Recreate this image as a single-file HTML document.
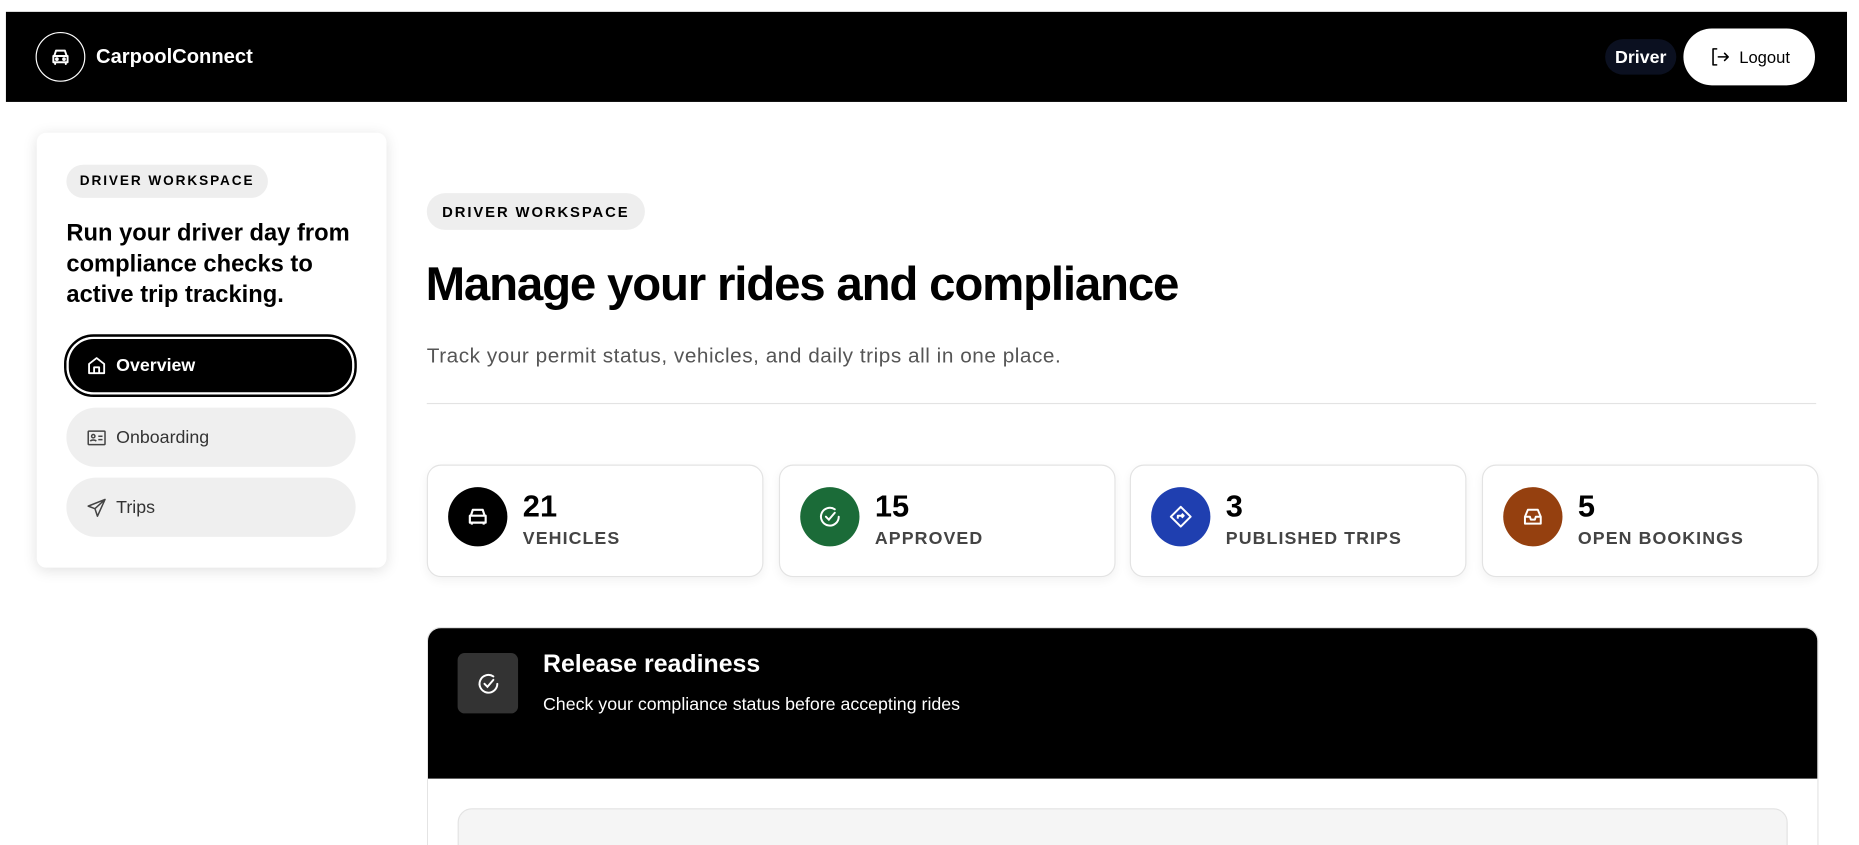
<!DOCTYPE html>
<html><head><meta charset="utf-8"><style>
html,body{margin:0;padding:0;background:#fff;overflow:hidden;width:1859px;height:845px}
#w{width:1563px;height:713px;overflow:hidden;transform:scale(1.1855,1.1851);transform-origin:0 0;position:relative;font-family:"Liberation Sans",sans-serif;color:#000}
.a{position:absolute}
.hdr{left:5px;top:10px;width:1553px;height:76px;background:#000}
.badge{background:#eee;border-radius:20px;font-size:12px;font-weight:700;letter-spacing:1.6px;display:flex;align-items:center;justify-content:center}
.nav{left:56px;width:244px;height:50px;border-radius:25px;background:#efefef;display:flex;align-items:center;font-size:15px;color:#333}
.nav svg{margin:0 8px 0 17px}
.card{top:392px;width:282px;height:93px;border:1px solid #e3e3e3;border-radius:12px;box-shadow:0 3px 8px rgba(0,0,0,.05);background:#fff}
.card .c{position:absolute;left:17px;top:18px;width:50px;height:50px;border-radius:50%;display:flex;align-items:center;justify-content:center}
.card .n{position:absolute;left:80px;top:19px;font-size:26px;font-weight:700}
.card .l{position:absolute;left:80px;top:53px;font-size:15px;font-weight:700;letter-spacing:0.9px;color:#444}
</style></head><body><div id="w">
<div class="a hdr"></div>
<div class="a" style="left:30px;top:27px;width:40px;height:40px;border:1px solid #fff;border-radius:50%;display:flex;align-items:center;justify-content:center">
<svg width="18" height="18" viewBox="0 0 24 24" fill="none" stroke="#fff" stroke-width="2.2" stroke-linecap="round" stroke-linejoin="round"><path d="M5 11l2-6h10l2 6M4 11h16v7H4zM6 18v2M18 18v2"/><circle cx="8" cy="14.5" r="1" fill="#fff"/><circle cx="16" cy="14.5" r="1" fill="#fff"/></svg></div>
<div class="a" style="left:81px;top:38px;color:#fff;font-size:17px;font-weight:700">CarpoolConnect</div>
<div class="a" style="left:1354px;top:33px;width:60px;height:30px;background:#0b1020;border-radius:15px;color:#fff;font-weight:700;font-size:15px;display:flex;align-items:center;justify-content:center">Driver</div>
<div class="a" style="left:1420px;top:24px;width:111px;height:48px;background:#fff;border-radius:24px;display:flex;align-items:center;justify-content:center;font-size:14px">
<svg width="20" height="18" viewBox="0 0 24 24" fill="none" stroke="#000" stroke-width="1.8" stroke-linecap="round" stroke-linejoin="round" style="margin-right:6px"><path d="M8 3H4v18h4M10 12h11M17 8l4 4-4 4"/></svg>Logout</div>

<div class="a" style="left:31px;top:112px;width:295px;height:367px;background:#fff;border-radius:8px;box-shadow:0 2px 12px rgba(0,0,0,.12)"></div>
<div class="a badge" style="left:56px;top:139px;width:170px;height:28px;font-size:11.5px">DRIVER WORKSPACE</div>
<div class="a" style="left:56px;top:184px;width:260px;font-size:20px;font-weight:700;line-height:26px">Run your driver day from compliance checks to active trip tracking.</div>
<div class="a nav" style="left:54px;top:282px;width:243px;height:49px;background:#000;color:#fff;font-weight:700;border:2px solid #000;box-shadow:inset 0 0 0 2px #fff">
<svg width="17" height="17" viewBox="0 0 24 24" fill="none" stroke="#fff" stroke-width="2.2" stroke-linejoin="round"><path d="M3 10l9-7 9 7v11H3zM9 21v-7h6v7"/></svg>Overview</div>
<div class="a nav" style="top:344px"><svg width="17" height="15" viewBox="0 0 24 20" fill="none" stroke="#444" stroke-width="1.8"><rect x="2" y="2" width="20" height="16" rx="1"/><circle cx="8" cy="8" r="2"/><path d="M4.5 14c1-2 6-2 7 0M14 8h5M14 12h5"/></svg>Onboarding</div>
<div class="a nav" style="top:403px"><svg width="17" height="17" viewBox="0 0 24 24" fill="none" stroke="#444" stroke-width="1.8" stroke-linejoin="round"><path d="M22 2L2 10l8 3 3 9zM10 13l12-11"/></svg>Trips</div>

<div class="a badge" style="left:360px;top:163px;width:184px;height:31px;font-size:12.5px">DRIVER WORKSPACE</div>
<div class="a" style="left:359px;top:218px;font-size:40px;font-weight:700;letter-spacing:-1px">Manage your rides and compliance</div>
<div class="a" style="left:360px;top:290px;font-size:17.5px;color:#555;letter-spacing:0.45px">Track your permit status, vehicles, and daily trips all in one place.</div>
<div class="a" style="left:360px;top:340px;width:1172px;height:1px;background:#e3e3e3"></div>

<div class="a card" style="left:360px"><div class="c" style="background:#000"><svg width="20" height="20" viewBox="0 0 24 24" fill="none" stroke="#fff" stroke-width="2.2" stroke-linejoin="round"><path d="M5 11l2-6h10l2 6M4 11h16v7H4zM6 18v2M18 18v2"/></svg></div><div class="n">21</div><div class="l">VEHICLES</div></div>
<div class="a card" style="left:657px"><div class="c" style="background:#1b6b38"><svg width="20" height="20" viewBox="0 0 24 24" fill="none" stroke="#fff" stroke-width="2" stroke-linecap="round"><path d="M21 12a9 9 0 1 1-4-7.5"/><path d="M8 12l3 3 6-7"/></svg></div><div class="n">15</div><div class="l">APPROVED</div></div>
<div class="a card" style="left:953px"><div class="c" style="background:#1f3fb0"><svg width="20" height="20" viewBox="0 0 24 24" fill="none" stroke="#fff" stroke-width="2" stroke-linejoin="round"><path d="M12 2l10 10-10 10L2 12z"/><path d="M9 14v-3h6M13 9l2 2-2 2"/></svg></div><div class="n">3</div><div class="l">PUBLISHED TRIPS</div></div>
<div class="a card" style="left:1250px"><div class="c" style="background:#95400f"><svg width="20" height="20" viewBox="0 0 24 24" fill="none" stroke="#fff" stroke-width="2" stroke-linejoin="round"><path d="M4 12l3-7h10l3 7v7H4zM4 12h5l1 3h4l1-3h5"/></svg></div><div class="n">5</div><div class="l">OPEN BOOKINGS</div></div>

<div class="a" style="left:360px;top:529px;width:1172px;height:184px;border:1px solid #e3e3e3;border-bottom:0;border-radius:12px 12px 0 0;overflow:hidden;background:#fff">
<div style="height:127px;background:#000"></div>
<div class="a" style="left:25px;top:21px;width:51px;height:51px;background:#333;border-radius:6px;display:flex;align-items:center;justify-content:center"><svg width="20" height="20" viewBox="0 0 24 24" fill="none" stroke="#fff" stroke-width="2" stroke-linecap="round"><path d="M21 12a9 9 0 1 1-4-7.5"/><path d="M8 12l3 3 6-7"/></svg></div>
<div class="a" style="left:97px;top:19px;color:#fff;font-size:21px;font-weight:700">Release readiness</div>
<div class="a" style="left:97px;top:56px;color:#fff;font-size:15px">Check your compliance status before accepting rides</div>
<div class="a" style="left:25px;top:152px;width:1120px;height:60px;background:#f5f5f5;border:1px solid #e3e3e3;border-radius:12px"></div>
</div>
</div></body></html>
